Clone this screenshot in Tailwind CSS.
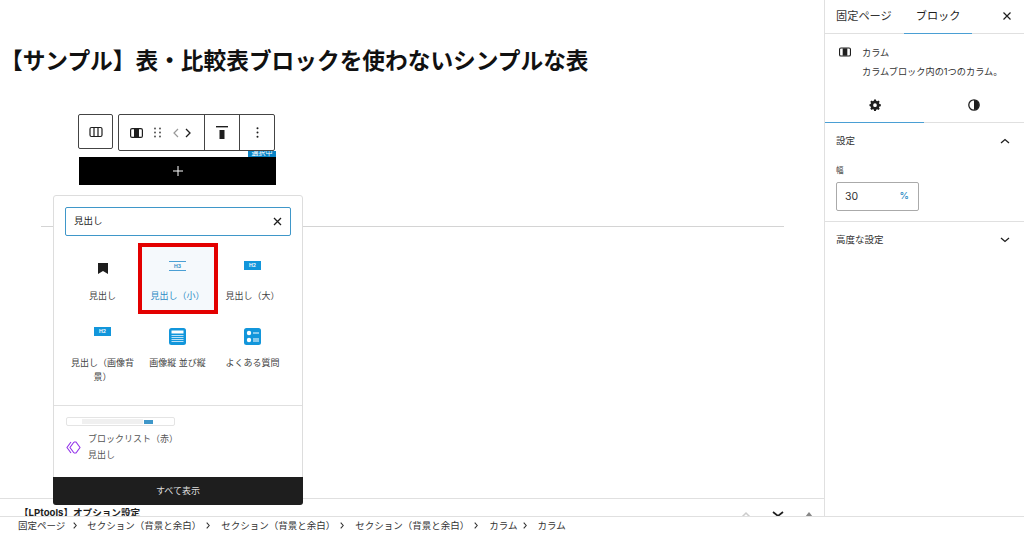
<!DOCTYPE html>
<html lang="ja"><head><meta charset="utf-8"><script src="https://cdn.jsdelivr.net/npm/@tailwindcss/browser@4"></script></head>
<body class="m-0 bg-white overflow-hidden">
<div class="relative flex flex-col w-[1024px] h-[534px] overflow-hidden bg-white text-[#1e1e1e] font-['Inter','Noto_Sans_CJK_JP',sans-serif]">
  <div class="flex flex-1 min-h-0">
    <main class="relative w-[825px] flex flex-col border-r border-[#e0e0e0]">
      <h1 class="pt-[46px] text-[22.7px] leading-[30px] font-bold text-[#111] whitespace-nowrap">【サンプル】表・比較表ブロックを使わないシンプルな表</h1>
      <div class="ml-[41px] mt-[150px] w-[743px] h-px bg-[#d4d4d4]"></div>
      <div class="mt-auto h-[18px] border-t border-[#e0e0e0] relative overflow-hidden">
        <div class="pl-[19px] pt-[7px] text-[9.6px] leading-[14px] font-bold whitespace-nowrap">【LPtools】オプション設定</div>
        <div class="absolute right-[10px] top-[11px] flex items-center gap-[19px]">
          <svg class="w-[12px] h-[10px]" viewBox="0 0 12 10" fill="none" stroke="#ccc" stroke-width="1.5"><path d="M2 7l4-4 4 4"/></svg>
          <svg class="w-[14px] h-[10px]" viewBox="0 0 14 10" fill="none" stroke="#1e1e1e" stroke-width="1.7"><path d="M2 2l5 4 5-4"/></svg>
          <svg class="w-[10px] h-[10px]" viewBox="0 0 10 10" fill="#888"><path d="M5 2l4 5H1z"/></svg>
        </div>
      </div>

      <!-- toolbar -->
      <div class="absolute left-[78px] top-[114px] w-[35px] h-[35px] flex items-center justify-center bg-white border border-[#444] rounded-[2px]">
        <svg class="w-[14px] h-[12px]" viewBox="0 0 14 12" fill="none" stroke="#1e1e1e" stroke-width="1.2"><rect x="1" y="1.5" width="12" height="9" rx="1.5"/><path d="M5 1.5v9M9 1.5v9"/></svg>
      </div>
      <div class="absolute left-[118px] top-[114px] h-[37px] w-[157px] flex bg-white border border-[#444] rounded-[2px]">
        <div class="w-[86px] flex items-center pl-[11px] border-r border-[#444]">
          <svg class="w-[13px] h-[10px]" viewBox="0 0 13 10"><rect x="0.6" y="0.6" width="11.8" height="8.8" rx="1.5" fill="none" stroke="#1e1e1e" stroke-width="1.2"/><rect x="4" y="1" width="5" height="8" fill="#1e1e1e"/></svg>
          <svg class="ml-[11px] w-[7px] h-[11px]" viewBox="0 0 7 11" fill="#444"><circle cx="1" cy="1.5" r=".9"/><circle cx="6" cy="1.5" r=".9"/><circle cx="1" cy="5.5" r=".9"/><circle cx="6" cy="5.5" r=".9"/><circle cx="1" cy="9.5" r=".9"/><circle cx="6" cy="9.5" r=".9"/></svg>
          <svg class="ml-[12px] w-[6px] h-[10px]" viewBox="0 0 6 10" fill="none" stroke="#999" stroke-width="1.2"><path d="M5 1L1 5l4 4"/></svg>
          <svg class="ml-[6px] w-[6px] h-[10px]" viewBox="0 0 6 10" fill="none" stroke="#1e1e1e" stroke-width="1.3"><path d="M1 1l4 4-4 4"/></svg>
        </div>
        <div class="w-[35px] flex items-center justify-center border-r border-[#444]">
          <svg class="w-[12px] h-[13px]" viewBox="0 0 12 13" fill="#1e1e1e"><rect width="12" height="1.4"/><rect x="3.5" y="4" width="5" height="9"/></svg>
        </div>
        <div class="flex-1 flex items-center justify-center">
          <svg class="w-[3px] h-[11px]" viewBox="0 0 3 11" fill="#1e1e1e"><circle cx="1.5" cy="1.2" r="1"/><circle cx="1.5" cy="5.5" r="1"/><circle cx="1.5" cy="9.8" r="1"/></svg>
        </div>
      </div>
      <div class="absolute left-[248px] top-[151px] w-[28px] h-[6px] bg-[#0a84c6] text-white text-[7px] leading-[4px] text-center overflow-hidden">選択中</div>
      <div class="absolute left-[79px] top-[157px] w-[197px] h-[28px] bg-black flex items-center justify-center">
        <svg class="w-[10px] h-[10px]" viewBox="0 0 10 10" stroke="#fff" stroke-width="1"><path d="M5 0v10M0 5h10"/></svg>
      </div>

      <!-- popover -->
      <div class="absolute left-[53px] top-[195px] w-[250px] h-[310px] flex flex-col bg-white border border-[#ddd] rounded-[3px]">
        <div class="mx-[11px] mt-[11px] h-[29px] flex items-center justify-between px-[8px] border-[1.5px] border-[#3f97c9] rounded-[2px] text-[9.5px]">
          <span>見出し</span>
          <svg class="w-[9px] h-[9px]" viewBox="0 0 9 9" stroke="#1e1e1e" stroke-width="1.3"><path d="M1 1l7 7M8 1l-7 7"/></svg>
        </div>
        <div class="grid grid-cols-[75px_75px_75px] grid-rows-[71px_91px] ml-[11px] mt-[7px] text-[9px] leading-[14px] text-center text-[#444]">
          <div class="flex flex-col items-center pt-[20px]">
            <svg class="w-[10px] h-[11px]" viewBox="0 0 10 11" fill="#1e1e1e"><path d="M0 0h10v11L5 8 0 11z"/></svg>
            <span class="mt-[15px]">見出し</span>
          </div>
          <div class="flex flex-col items-center pt-[14px] bg-[#f5f9fc] text-[#2b8ac4] border-[4px] border-[#e30000] -mx-[2.5px]">
            <div class="w-[17px] h-[10px] border-y border-[#4a9fd4] text-[5px] leading-[8px] font-bold">H3</div>
            <span class="mt-[18px]">見出し（小）</span>
          </div>
          <div class="flex flex-col items-center pt-[18px]">
            <div class="w-[17px] h-[9px] bg-[#1296db] text-white text-[5px] leading-[9px] font-bold">H2</div>
            <span class="mt-[19px]">見出し（大）</span>
          </div>
          <div class="flex flex-col items-center pt-[13px] px-[6px]">
            <div class="w-[17px] h-[9px] bg-[#1296db] text-white text-[5px] leading-[9px] font-bold">H2</div>
            <span class="mt-[20px]">見出し（画像背景）</span>
          </div>
          <div class="flex flex-col items-center pt-[14px]">
            <svg class="w-[17px] h-[17px]" viewBox="0 0 17 17"><rect width="17" height="17" rx="2.5" fill="#1296db"/><rect x="2.5" y="2.5" width="12" height="3" fill="#fff"/><path d="M2.5 7.5h12M2.5 9.5h12M2.5 11.5h12M2.5 13.5h12" stroke="#cfeafa" stroke-width=".9"/></svg>
            <span class="mt-[11px]">画像縦 並び縦</span>
          </div>
          <div class="flex flex-col items-center pt-[14px]">
            <svg class="w-[17px] h-[17px]" viewBox="0 0 17 17"><rect width="17" height="17" rx="2.5" fill="#1296db"/><circle cx="5" cy="5" r="2.2" fill="#fff"/><circle cx="5" cy="12" r="2.2" fill="#fff"/><path d="M9 5h6M9 11h6M9 13h6" stroke="#fff" stroke-width="1"/></svg>
            <span class="mt-[11px]">よくある質問</span>
          </div>
        </div>
        <div class="border-t border-[#e0e0e0] flex-1 px-[12px] pt-[11px]">
          <div class="w-[109px] h-[9px] border border-[#e4e4e4] rounded-[2px] flex items-center pl-[15px]">
            <div class="w-[61px] h-[5px] bg-[#f0f0f0]"></div><div class="ml-px w-[9px] h-[4px] bg-[#3f97c9]"></div>
          </div>
          <div class="flex items-center mt-[5px]">
            <svg class="w-[15px] h-[13px]" viewBox="0 0 15 13" fill="none" stroke="#9333ea" stroke-width="1.1"><path d="M5 1L1 6.5 5 12M8 1L4 6.5 8 12M8 1h2l4 5.5L10 12H8"/></svg>
            <div class="ml-[7px] text-[9px] leading-[16px] text-[#555]"><div>ブロックリスト（赤）</div><div>見出し</div></div>
          </div>
        </div>
        <div class="h-[28px] -mx-px -mb-px bg-[#1e1e1e] rounded-b-[3px] flex items-center justify-center text-[9px] text-[#ddd]">すべて表示</div>
      </div>
    </main>

    <aside class="w-[199px] flex flex-col text-[#333]">
      <div class="h-[34px] relative border-b border-[#e0e0e0] flex items-center text-[11.2px]">
        <span class="ml-[11px]">固定ページ</span>
        <span class="ml-[24px] text-[#1e1e1e]">ブロック</span>
        <span class="absolute left-[79px] right-[52px] -bottom-px h-[1.5px] bg-[#4a9fd4]"></span>
        <svg class="absolute right-[13px] top-[12px] w-[8px] h-[8px]" viewBox="0 0 8 8" stroke="#1e1e1e" stroke-width="1.2"><path d="M.5.5l7 7M7.5.5l-7 7"/></svg>
      </div>
      <div class="flex pl-[14px] pt-[9px] h-[52px]">
        <svg class="w-[12px] h-[10px] mt-[4px]" viewBox="0 0 13 10"><rect x="0.6" y="0.6" width="11.8" height="8.8" rx="1.5" fill="none" stroke="#1e1e1e" stroke-width="1.2"/><rect x="4" y="1" width="5" height="8" fill="#1e1e1e"/></svg>
        <div class="ml-[11px] text-[9.2px] leading-[19px] whitespace-nowrap"><div>カラム</div><div>カラムブロック内の1つのカラム。</div></div>
      </div>
      <div class="flex h-[37px] border-b border-[#e0e0e0]">
        <div class="relative w-[99px] flex items-center justify-center">
          <svg class="w-[12px] h-[12px] mt-[1px]" viewBox="0 0 12 13"><path fill="#1e1e1e" fill-rule="evenodd" d="M5 .5h2l.3 1.5 1.1.5 1.3-.8 1.4 1.4-.8 1.3.5 1.1 1.5.3v2l-1.5.3-.5 1.1.8 1.3-1.4 1.4-1.3-.8-1.1.5L7 13H5l-.3-1.5-1.1-.5-1.3.8L.9 10.4l.8-1.3-.5-1.1L0 7.7v-2l1.2-.3.5-1.1-.8-1.3L2.3 1.6l1.3.8 1.1-.5zM6 4.7a2 2 0 100 4 2 2 0 000-4z"/></svg>
          <span class="absolute left-0 right-0 -bottom-px h-[1.5px] bg-[#4a9fd4]"></span>
        </div>
        <div class="w-[100px] flex items-center justify-center">
          <svg class="w-[12px] h-[12px] mt-[1px]" viewBox="0 0 12 12"><circle cx="6" cy="6" r="5.2" fill="none" stroke="#1e1e1e" stroke-width="1.3"/><path d="M6 1a5 5 0 010 10z" fill="#1e1e1e"/></svg>
        </div>
      </div>
      <div class="h-[99px] border-b border-[#e0e0e0] px-[11px]">
        <div class="pt-[11px] text-[9.5px] leading-[14px] flex justify-between"><span>設定</span>
          <svg class="w-[10px] h-[6px] mt-[4px] mr-[3px]" viewBox="0 0 10 6" fill="none" stroke="#1e1e1e" stroke-width="1.3"><path d="M1 5l4-3.5L9 5"/></svg>
        </div>
        <div class="mt-[17px] text-[7.5px] leading-[12px]">幅</div>
        <div class="mt-[5px] w-[83px] h-[29px] border border-[#aaa] rounded-[2px] flex items-center justify-between pl-[8px] pr-[9px] text-[10.5px]">
          <span>30</span><span class="text-[#2b8ac4] text-[9.5px] font-medium">%</span>
        </div>
      </div>
      <div class="px-[11px] pt-[11px] text-[9.5px] leading-[14px] flex justify-between"><span>高度な設定</span>
        <svg class="w-[10px] h-[6px] mt-[4px] mr-[3px]" viewBox="0 0 10 6" fill="none" stroke="#1e1e1e" stroke-width="1.3"><path d="M1 1l4 3.5L9 1"/></svg>
      </div>
    </aside>
  </div>
  <footer class="h-[18px] border-t border-[#e0e0e0] bg-white flex items-center pl-[18px] text-[9.5px] leading-[16px] text-[#333] whitespace-nowrap">
    <span>固定ページ</span>
    <svg class="ml-[8px] mr-[4px] w-[4px] h-[7px]" viewBox="0 0 4 7" fill="none" stroke="#333" stroke-width="1.1"><path d="M.7.7l2.5 2.8L.7 6.3"/></svg>
    <span class="ml-[6px] mr-[5px]">セクション（背景と余白）</span>
    <svg class="mr-[5px] w-[4px] h-[7px]" viewBox="0 0 4 7" fill="none" stroke="#333" stroke-width="1.1"><path d="M.7.7l2.5 2.8L.7 6.3"/></svg>
    <span class="ml-[6px] mr-[5px]">セクション（背景と余白）</span>
    <svg class="mr-[5px] w-[4px] h-[7px]" viewBox="0 0 4 7" fill="none" stroke="#333" stroke-width="1.1"><path d="M.7.7l2.5 2.8L.7 6.3"/></svg>
    <span class="ml-[6px] mr-[5px]">セクション（背景と余白）</span>
    <svg class="mr-[5px] w-[4px] h-[7px]" viewBox="0 0 4 7" fill="none" stroke="#333" stroke-width="1.1"><path d="M.7.7l2.5 2.8L.7 6.3"/></svg>
    <span class="ml-[6px] mr-[5px]">カラム</span>
    <svg class="mr-[5px] w-[4px] h-[7px]" viewBox="0 0 4 7" fill="none" stroke="#333" stroke-width="1.1"><path d="M.7.7l2.5 2.8L.7 6.3"/></svg>
    <span class="ml-[6px]">カラム</span>
  </footer>
</div>
</body></html>
